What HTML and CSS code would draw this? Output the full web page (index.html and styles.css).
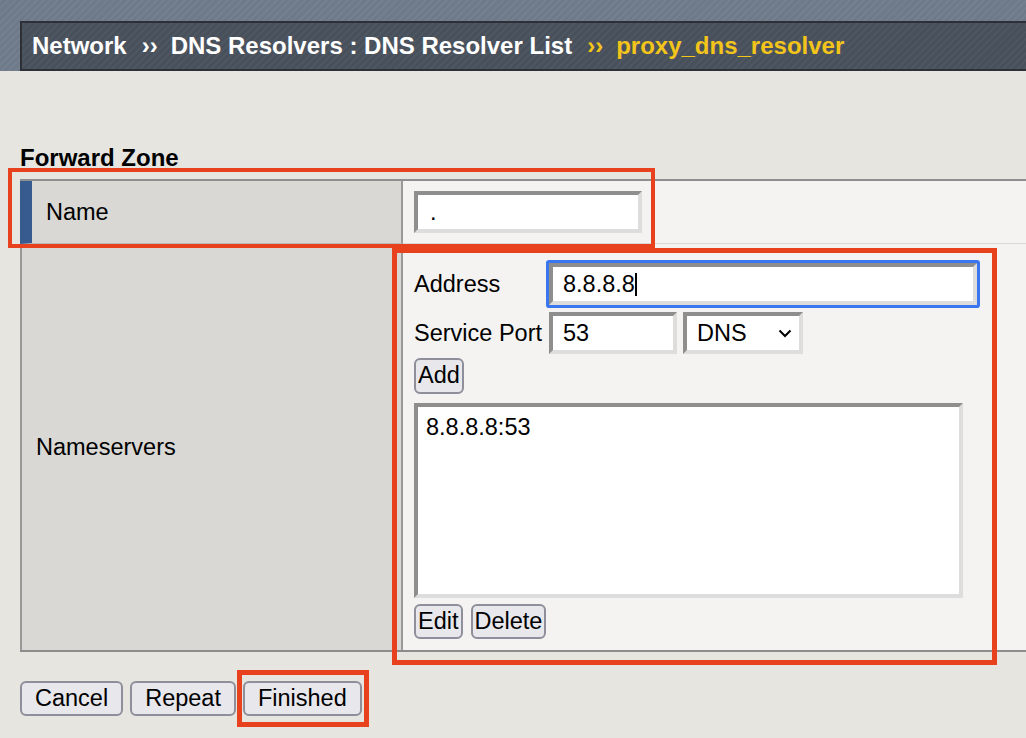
FILE: index.html
```html
<!DOCTYPE html>
<html lang="en">
<head>
<meta charset="utf-8">
<title>proxy_dns_resolver</title>
<link rel="stylesheet" href="styles.css">
</head>
<body>
<div class="page">
  <header class="topbar">
    <nav class="crumbs">
      <span>Network</span><span class="sep">››</span><span>DNS Resolvers : DNS Resolver List</span><span class="sep cur">››</span><span class="cur">proxy_dns_resolver</span>
    </nav>
  </header>

  <main class="content">
    <h2 class="section-title">Forward Zone</h2>
    <div class="form-table">
      <div class="lbl lbl-req">Name</div>
      <div class="val val-name"><input class="field name-field" type="text" value="."></div>

      <div class="lbl lbl-ns">Nameservers</div>
      <div class="val val-ns">
        <div class="ns-grid">
          <span class="ns-lbl">Address</span>
          <div class="field addr-field">8.8.8.8<span class="caret"></span></div>
          <span class="ns-lbl">Service Port</span>
          <div class="port-row">
            <input class="field port-field" type="text" value="53">
            <div class="field select-box"><span>DNS</span>
              <svg class="chev" width="14" height="9" viewBox="0 0 14 9"><path d="M1.5 1.5 L7 7 L12.5 1.5" fill="none" stroke="#000" stroke-width="2"/></svg>
            </div>
          </div>
        </div>
        <button class="btn btn-sm btn-add" type="button">Add</button>
        <div class="listbox"><div class="opt">8.8.8.8:53</div></div>
        <div class="ns-actions">
          <button class="btn btn-sm" type="button">Edit</button>
          <button class="btn btn-sm" type="button">Delete</button>
        </div>
      </div>
    </div>

    <div class="actions">
      <button class="btn" type="button">Cancel</button>
      <button class="btn" type="button">Repeat</button>
      <button class="btn" type="button">Finished</button>
    </div>
  </main>

  <div class="mark mark-name"></div>
  <div class="mark mark-ns"></div>
  <div class="mark mark-finish"></div>
</div>
</body>
</html>
```

FILE: styles.css
```css
html, body {
  margin: 0;
  padding: 0;
  overflow: hidden;
}
body {
  background: #e6e5e0;
  font-family: "Liberation Sans", Arial, sans-serif;
  color: #000;
}
.page {
  position: relative;
  width: 1026px;
  height: 738px;
}

/* header */
.topbar {
  height: 71px;
  padding-top: 21px;
  box-sizing: border-box;
  background-color: #6e7989;
  background-image: repeating-linear-gradient(135deg, rgba(255,255,255,0.05) 0 2px, rgba(0,0,0,0) 2px 5px);
}
.crumbs {
  margin-left: 20px;
  height: 50px;
  box-sizing: border-box;
  border: 2px solid #2d3036;
  border-right: none;
  background-color: #48505b;
  background-image: repeating-linear-gradient(135deg, rgba(255,255,255,0.035) 0 2px, rgba(0,0,0,0) 2px 5px);
  padding-left: 10px;
  display: flex;
  align-items: center;
  font-size: 24px;
  font-weight: bold;
  color: #ffffff;
  line-height: 46px;
  white-space: nowrap;
}
.sep {
  margin: 0 13px 0 15px;
}
.cur {
  color: #f3c51a;
}

/* content */
.content {
  padding-left: 20px;
}
.section-title {
  margin: 75px 0 9px;
  font-size: 24px;
  line-height: 24px;
  font-weight: bold;
}
.form-table {
  display: grid;
  grid-template-columns: 383px 1fr;
  border-top: 2px solid #8f8f8f;
  border-bottom: 2px solid #8c8c8c;
  font-size: 23.5px;
}
.lbl {
  box-sizing: border-box;
  background: #d9d8d4;
  border-right: 2px solid #999999;
  padding-left: 14px;
  display: flex;
  align-items: center;
}
.lbl-req {
  border-left: 12px solid #375b8f;
  border-bottom: 1px solid #b9b9b6;
}
.lbl-ns {
  border-left: 2px solid #999999;
}
.val {
  background: #f4f3f1;
  padding-left: 11px;
}
.val-name {
  padding-top: 10px;
  padding-bottom: 10px;
  border-bottom: 1px solid #dadada;
}

/* fields */
.field {
  box-sizing: border-box;
  height: 42px;
  border-style: solid;
  border-width: 4px;
  border-color: #8e8e8e #dddddd #dddddd #8e8e8e;
  background: #ffffff;
  font-family: "Liberation Sans", Arial, sans-serif;
  font-size: 23.5px;
  color: #000;
  padding: 0 10px;
  margin: 0;
  outline: none;
  border-radius: 0;
}
.name-field {
  display: block;
  width: 228px;
  padding-left: 12px;
}
.val-ns {
  display: flex;
  flex-direction: column;
  align-items: flex-start;
  padding-top: 19px;
  padding-bottom: 11px;
}
.ns-grid {
  display: grid;
  grid-template-columns: 135px 428px;
  row-gap: 7px;
  align-items: center;
}
.ns-lbl {
  white-space: nowrap;
}
.addr-field {
  display: flex;
  align-items: center;
  box-shadow: 0 0 0 3px #3a76f0;
  border-radius: 1px;
}
.caret {
  display: inline-block;
  width: 2px;
  height: 23px;
  background: #000;
  margin-left: 0;
}
.port-row {
  display: flex;
  gap: 6px;
}
.port-field {
  width: 128px;
}
.select-box {
  width: 120px;
  display: flex;
  align-items: center;
  justify-content: space-between;
  padding-right: 7px;
}
.chev {
  display: block;
}

/* buttons */
.btn {
  box-sizing: border-box;
  height: 35px;
  padding: 0 13px;
  border: 2px solid #8f8f9b;
  border-radius: 6px;
  background: #e7e7ec;
  font-family: "Liberation Sans", Arial, sans-serif;
  font-size: 23.5px;
  line-height: 1;
  color: #000;
  margin: 0;
}
.btn-sm {
  padding: 0 2px;
}
.btn-add {
  margin-top: 4px;
  height: 36px;
}
.listbox {
  box-sizing: border-box;
  margin-top: 9px;
  width: 549px;
  height: 195px;
  border-style: solid;
  border-width: 4px;
  border-color: #8e8e8e #dddddd #dddddd #8e8e8e;
  background: #ffffff;
}
.opt {
  padding: 7px 8px;
  line-height: 26px;
}
.ns-actions {
  margin-top: 6px;
  display: flex;
  gap: 8px;
}
.actions {
  margin-top: 29px;
  display: flex;
  gap: 7px;
}

/* annotation marks */
.mark {
  position: absolute;
  box-sizing: border-box;
  border: 5px solid #e8411e;
  pointer-events: none;
}
.mark-name {
  left: 8px;
  top: 168px;
  width: 647px;
  height: 80px;
  border-width: 4px;
}
.mark-ns {
  left: 392px;
  top: 248px;
  width: 605px;
  height: 417px;
}
.mark-finish {
  left: 237px;
  top: 670px;
  width: 132px;
  height: 57px;
}
```
